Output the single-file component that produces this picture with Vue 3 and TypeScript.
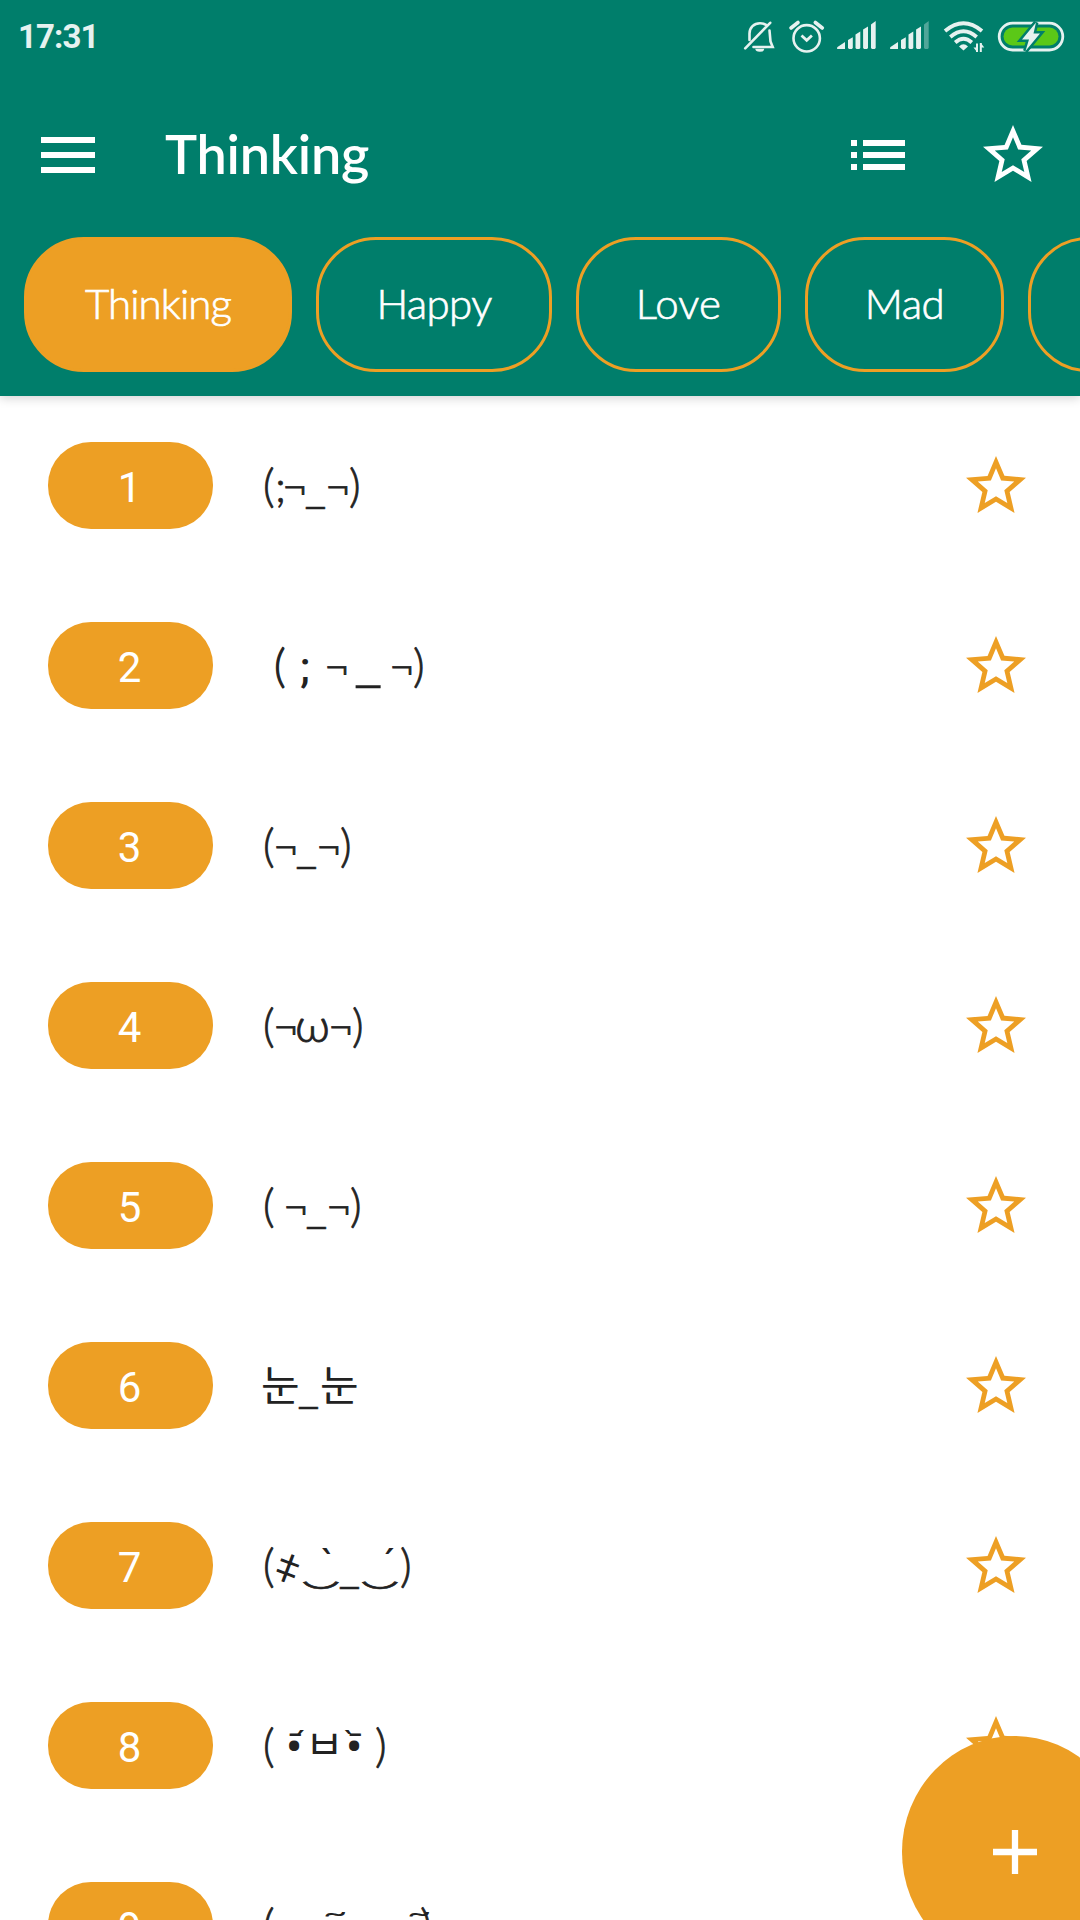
<script setup lang="ts">
interface Piece { t: string; w: number; m?: number; y?: number; s?: number; k?: string; tf?: string }
interface Chip { label: string; ls: number; w: number }

const chips: Chip[] = [
  { label: 'Thinking', ls: -0.9, w: 268 },
  { label: 'Happy', ls: -0.6, w: 236 },
  { label: 'Love', ls: 0.2, w: 205 },
  { label: 'Mad', ls: -0.5, w: 199 },
  { label: 'Sad', ls: -0.5, w: 190 },
]

const open = (w = 12): Piece => ({ t: '(', w, s: 45, k: 'thin' })
const close = (m = 0): Piece => ({ t: ')', w: 14, m, s: 45, k: 'thin' })
const neg = (m = 0): Piece => ({ t: '¬', w: 24, m: m - 2, s: 44, k: 'thin' })
const bar = (): Piece => ({ t: '_', w: 21, s: 45, y: 1, k: 'under' })

const rows: Piece[][] = [
  [open(), { t: ';', w: 9, s: 44, k: 'thin' }, neg(), bar(), neg(), close()],
  [
    { t: '(', w: 26, m: 11, s: 45, k: 'thin heavy' }, { t: ';', w: 26, s: 42, k: 'roboto' }, neg(),
    { t: '_', w: 26, m: 8, s: 58, k: 'under', y: -2 }, neg(9), close(),
  ],
  [open(), neg(), bar(), neg(), close()],
  [open(), neg(), { t: 'ω', w: 33, m: -2, s: 48, k: 'thin' }, neg(2), close()],
  [open(22), neg(), bar(), neg(), close()],
  [{ t: '눈', w: 38, m: -2, y: -1 }, bar(), { t: '눈', w: 38, y: -1 }],
  [
    open(), { t: '҂', w: 26, m: 7, s: 35, y: -2, tf: 'rotate(-14deg)' },
    { t: '‿', w: 38, m: -6, s: 62, y: -4, k: 'smile', tf: 'scaleY(.55)' }, { t: '`', w: 19, m: -19, s: 40, y: -3, k: 'roboto light' }, bar(),
    { t: '‿', w: 38, s: 62, y: -4, k: 'smile', tf: 'scaleY(.55)' }, { t: '´', w: 16, m: -16, s: 40, y: -3, k: 'roboto light' }, close(1),
  ],
  [
    open(22),
    { t: '•', w: 14, m: 1, s: 46, y: 1, k: 'roboto' }, { t: '¯', w: 13, m: -13, s: 34, y: -5, k: 'roboto' }, { t: '´', w: 8, m: -4, s: 28, y: -11, k: 'roboto' },
    { t: 'ㅂ', w: 34, m: 1, s: 42, y: -2 },
    { t: '•', w: 14, m: 7, s: 46, y: 1, k: 'roboto' }, { t: '¯', w: 13, m: -13, s: 34, y: -5, k: 'roboto' }, { t: '`', w: 10, m: -16, s: 28, y: -11, k: 'roboto' },
    close(21),
  ],
  [open(60), { t: '~', w: 84, y: -26, tf: 'scaleY(.6)' }, { t: '~', w: 12, y: -26, tf: 'scaleY(.6)' }, close(1)],
]

const glyph = (p: Piece) => ({
  width: p.w + 'px',
  marginLeft: (p.m ?? 0) + 'px',
  fontSize: (p.s ?? 42) + 'px',
  transform: `translateY(${p.y ?? 0}px) ${p.tf ?? ''}`,
})
</script>

<template>
  <div class="screen">
    <header class="top">
      <div class="status">
        <span class="time">17:31</span>
        <svg class="sys" width="360" height="80" viewBox="0 0 360 80" fill="none" stroke="#e6f2f0">
          <g stroke-width="2.6">
            <path d="M29.500 40V33.500C29.500 27.500 34 23.200 40 23.200c2.500 0 4.500 .6 6 1.700M49.500 30.500l1 11L52.700 47H33.500M25.200 48.300L50.200 22.800" stroke-linecap="round" />
            <path d="M35.300 48.800h9a4.500 3 0 0 1-9 0z" fill="#e6f2f0" stroke="none" />
            <circle cx="86.700" cy="38.300" r="13.200" />
            <path d="M81.500 35.500l5.200 4.800 5.200-4.800" stroke-width="2.800" />
            <path d="M71 28l7-5.500M102.300 28l-7-5.500" stroke-width="3.600" stroke-linecap="round" />
          </g>
          <g fill="#e6f2f0" stroke="none">
            <g v-for="ox in [0, 53]" :key="ox" :transform="`translate(${ox} 0)`">
              <path d="M117.500 47l7.500-5v7h-6.500q-2.500 0-1-2zM128 40l4.800-2.800V48l-1 1H129l-1-1zM135.500 34.500l4.800-3V48l-1 1h-2.800l-1-1zM143.100 29.500l4.900-3V48l-1 1h-2.900l-1-1z" />
              <path d="M151 24.500l4.700-3.500V48l-1 1h-2.700l-1-1z" :opacity="ox ? 0.35 : 1" />
            </g>
            <path d="M239 46.500q4.500-4.600 9 0l-4.500 4z" />
          </g>
          <g stroke-width="3.800">
            <path d="M225 31q18.500-15.500 37 0M230.300 37q13.200-11.500 26.400 0M235.200 42.500q8.300-7.500 16.600 0" />
          </g>
          <path d="M257 43.500v8.500M260.800 43v9" stroke-width="2" />
          <path d="M253.500 47.500l3.500 4.500v-4.500zM264.300 47.500l-3.500-4.500v4.500z" fill="#e6f2f0" stroke="none" />
          <rect x="279.200" y="23.200" width="63.600" height="26.800" rx="13.400" stroke-width="2.800" />
          <rect x="283.500" y="27.500" width="55" height="18" rx="9" fill="#5bc817" stroke="none" />
          <path d="M316 22.500L302 39.500h7L305.500 51 320 33.500h-6.500z" fill="#e6f2f0" stroke="#007e6b" stroke-width="5" paint-order="stroke" />
        </svg>
      </div>
      <nav class="bar">
        <svg class="ic" viewBox="0 0 24 24" fill="#fff"><path d="M3 18h18v-2H3v2zm0-5h18v-2H3v2zm0-7v2h18V6H3z" /></svg>
        <h1>Thinking</h1>
        <svg class="ic list" viewBox="0 0 24 24" fill="#fff"><path d="M3 13h2v-2H3v2zm0 4h2v-2H3v2zm0-8h2V7H3v2zm4 4h14v-2H7v2zm0 4h14v-2H7v2zM7 7v2h14V7H7z" /></svg>
        <svg class="ic" viewBox="0 0 24 24" fill="#fff"><path d="M22 9.240l-7.190-.62L12 2 9.190 8.630 2 9.240l5.460 4.730L5.820 21 12 17.270 18.180 21l-1.630-7.030L22 9.240zM12 15.400l-3.760 2.270 1-4.280-3.320-2.880 4.380-.38L12 6.100l1.710 4.040 4.380.38-3.320 2.880 1 4.280L12 15.400z" /></svg>
      </nav>
      <div class="chips">
        <div v-for="(c, i) in chips" :key="c.label" class="chip" :class="{ on: i === 0 }" :style="{ width: c.w + 'px', letterSpacing: c.ls + 'px' }">{{ c.label }}</div>
      </div>
    </header>
    <main class="list-body">
      <div v-for="(r, i) in rows" :key="i" class="row">
        <div class="num">{{ i + 1 }}</div>
        <div class="face">
          <span v-for="(p, k) in r" :key="k" class="pc" :class="p.k" :style="glyph(p)">{{ p.t }}</span>
        </div>
        <svg class="ic" viewBox="0 0 24 24" fill="#ed9f24"><path d="M22 9.240l-7.190-.62L12 2 9.190 8.630 2 9.240l5.460 4.730L5.820 21 12 17.270 18.180 21l-1.630-7.030L22 9.240zM12 15.400l-3.760 2.270 1-4.280-3.320-2.880 4.380-.38L12 6.100l1.710 4.040 4.380.38-3.320 2.880 1 4.280L12 15.400z" /></svg>
      </div>
    </main>
    <button class="fab" aria-label="Add">
      <svg width="44" height="44" viewBox="0 0 44 44" stroke="#fff" stroke-width="6.300"><path d="M22 0v44M0 22h44" /></svg>
    </button>
  </div>
</template>

<style>
body { margin: 0; overflow: hidden; }
</style>
<style scoped>
.screen { position: relative; width: 1080px; height: 1920px; overflow: hidden; background: #fff; display: flex; flex-direction: column; }
.top { flex: none; height: 396px; box-sizing: border-box; background: #007e6b; box-shadow: 0 2px 10px rgba(0, 0, 0, .18); z-index: 1; }
.status { height: 80px; display: flex; justify-content: space-between; }
.time { font: 700 33px/74px Roboto, sans-serif; color: #e6f2f0; padding-left: 18px; letter-spacing: -.9px; }
.sys { flex: none; }
.bar { height: 150px; display: flex; align-items: center; padding: 0 31px 0 32px; }
.ic { width: 72px; height: 72px; flex: none; }
h1 { margin: 0 0 2px; padding-left: 61px; flex: 1; font: 600 54px/70px Lato, sans-serif; color: #fff; letter-spacing: -.2px; }
.list { margin-right: 63px; }
.chips { display: flex; gap: 24px; padding: 7px 24px 0; }
.chip { flex: none; box-sizing: border-box; height: 135px; border: 3px solid #ed9f24; border-radius: 60px; color: #fff; font: 300 42px/127px Lato, sans-serif; -webkit-text-stroke: .7px #fff; text-align: center; white-space: nowrap; }
.chip.on { background: #ed9f24; }
.list-body { flex: 1; overflow: hidden; }
.row { height: 180px; box-sizing: border-box; display: flex; align-items: center; padding: 0 48px; }
.num { box-sizing: border-box; width: 165px; height: 87px; margin-bottom: 2px; padding-right: 2px; border-radius: 43px; background: #ed9f24; color: #fff; font: 400 42px/91px Roboto, sans-serif; text-align: center; flex: none; }
.face { flex: 1; margin: 0 0 20px 50px; display: flex; align-items: baseline; height: 60px; font: 400 42px/60px Lato, "Noto Sans", "Noto Sans CJK KR", "DejaVu Sans", sans-serif; color: #222; }
/* fixed-height strut keeps every face on the same baseline */
.face::before { content: ""; width: 0; height: 56px; flex: none; }
.pc { flex: none; height: 60px; white-space: pre; line-height: 60px; transform-origin: 50% 100%; }
.thin { font-weight: 300; -webkit-text-stroke: .8px #222; }
.heavy { -webkit-text-stroke-width: 1.1px; }
.smile { -webkit-text-stroke: 1.2px #222; }
.under { font-family: "Noto Sans", sans-serif; font-weight: 300; -webkit-text-stroke: .4px #222; }
.roboto { font-family: Roboto, sans-serif; font-weight: 500; }
.light { font-weight: 400; }
.fab { position: absolute; left: 902px; top: 1736px; width: 225px; height: 232px; border: 0; padding: 0 0 1px; border-radius: 50%; background: #ed9f24; display: flex; align-items: center; justify-content: center; z-index: 2; }
</style>
